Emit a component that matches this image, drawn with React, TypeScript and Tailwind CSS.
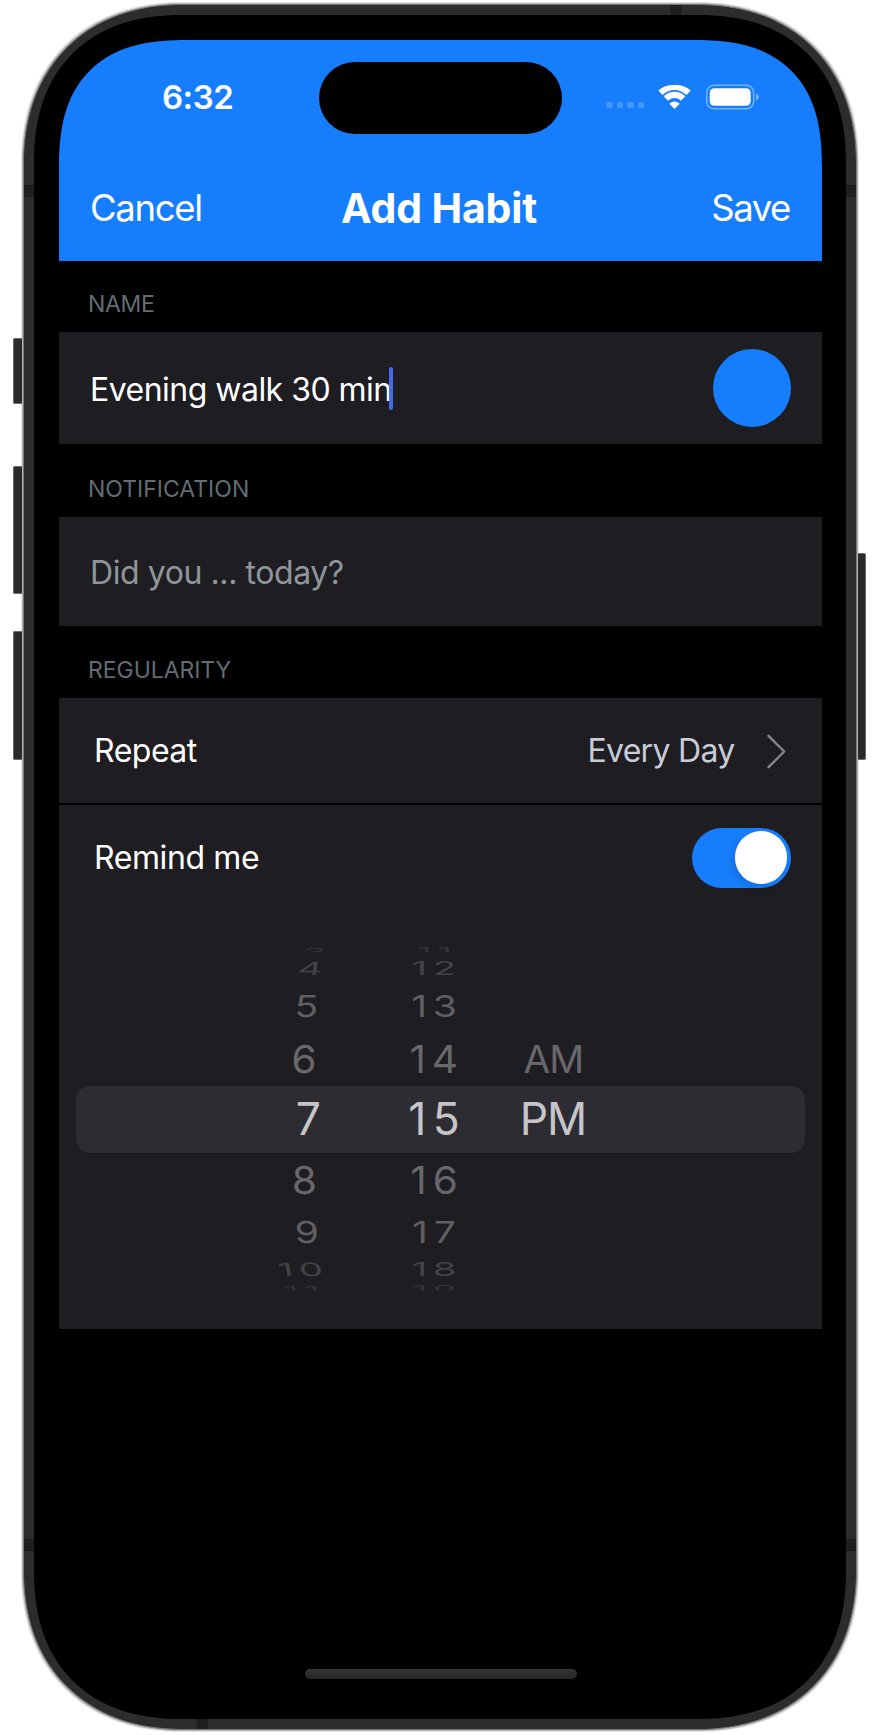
type PickerRow = {
  hour: string;
  minute: string;
  period?: string;
  height: string;
  color: string;
  sx: number;
  sy: number;
  skew: number;
  hourShift: number;
  shiftY?: number;
  clipped?: boolean;
};

const rows: PickerRow[] = [
  { hour: "3", minute: "11", height: "h-[15px]", color: "text-[#343337]", sx: 0.84, sy: 0.25, skew: -20, hourShift: 9, shiftY: 2, clipped: true },
  { hour: "4", minute: "12", height: "h-[22px]", color: "text-[#434246]", sx: 0.86, sy: 0.41, skew: -10, hourShift: 4.8 },
  { hour: "5", minute: "13", height: "h-[53px]", color: "text-[#5f5e62]", sx: 0.88, sy: 0.68, skew: -3, hourShift: 2 },
  { hour: "6", minute: "14", period: "AM", height: "h-[53px]", color: "text-[#68676b]", sx: 0.91, sy: 0.86, skew: -1, hourShift: -0.7 },
  { hour: "7", minute: "15", period: "PM", height: "h-[67px]", color: "text-[#c6c5c8]", sx: 1, sy: 1, skew: 0, hourShift: 3.3 },
  { hour: "8", minute: "16", height: "h-[55px]", color: "text-[#68676b]", sx: 0.91, sy: 0.86, skew: 1, hourShift: -0.5 },
  { hour: "9", minute: "17", height: "h-[50px]", color: "text-[#5f5e62]", sx: 0.88, sy: 0.68, skew: 3, hourShift: 2 },
  { hour: "10", minute: "18", height: "h-[24px]", color: "text-[#434246]", sx: 0.86, sy: 0.41, skew: 10, hourShift: -5 },
  { hour: "11", minute: "19", height: "h-[13px]", color: "text-[#343337]", sx: 0.84, sy: 0.25, skew: 20, hourShift: -3.5, shiftY: 2, clipped: true },
];

function WheelText({ text, row, tilt = false }: { text: string; row: PickerRow; tilt?: boolean }) {
  const x = tilt ? row.hourShift : 0;
  const skew = tilt ? row.skew : 0;
  const sx = text === "AM" ? 0.87 : row.sx;
  const spacing = /^\d\d$/.test(text) ? "-mr-[6.5px] tracking-[6.5px]" : text.length === 2 ? "tracking-[-1px]" : "";
  return (
    <span
      className={`block text-[44.5px] leading-none whitespace-nowrap ${spacing}`}
      style={{
        transform: `translate(${x}px, ${row.shiftY ?? 0}px) skewX(${skew}deg) scale(${sx}, ${row.sy})`,
        transformOrigin: spacing.startsWith("-mr") ? "calc(50% - 3.25px) 50%" : "50% 50%",
        clipPath: row.clipped ? "inset(0 0 50% 0)" : undefined,
      }}
    >
      {text}
    </span>
  );
}

function TimePicker() {
  return (
    <div className="flex flex-col px-[17px] pt-[32.5px] pb-[34px]">
      {rows.map((row) => (
        <div
          key={row.minute}
          className={`flex items-center pl-[202px] ${row.height} ${row.color} ${row.period === "PM" ? "rounded-[14px] bg-[#2d2c32]" : ""}`}
        >
          <div className="flex w-[54px] justify-center">
            <WheelText text={row.hour} row={row} tilt />
          </div>
          <div className="ml-[72px] flex w-[60px] justify-center">
            <WheelText text={row.minute} row={row} />
          </div>
          <div className="ml-[58px] flex w-[62px] justify-center">
            {row.period && <WheelText text={row.period} row={row} />}
          </div>
        </div>
      ))}
    </div>
  );
}

function StatusBar() {
  return (
    <div className="flex h-[113px] items-center pl-[103px]">
      <span className="w-[157px] pt-[2px] text-[33px] font-semibold tracking-[-0.5px]">6:32</span>
      <div className="mt-[2px] h-[72px] w-[243px] rounded-full bg-black" />
      <div className="mt-[17px] ml-[44px] flex gap-[4px]">
        {[0, 1, 2, 3].map((i) => (
          <span key={i} className="size-[6.5px] rounded-[2px] bg-white/20" />
        ))}
      </div>
      <svg className="ml-[14px] h-[24px] w-[33px]" viewBox="0 0 33 24" fill="#fff">
        <path d="M16.5 4.9c4.4 0 8.4 1.7 11.400 4.600.3.3.7.3 1 0l3.200-3.300c.3-.3.3-.8 0-1.100A22.300 22.300 0 0 0 16.500 0 22.300 22.300 0 0 0 .900 5.100c-.300.300-.300.800 0 1.100l3.200 3.300c.300.300.700.300 1 0A16.500 16.500 0 0 1 16.500 4.900Z" />
        <path d="M16.500 12.900c2.300 0 4.300.800 5.900 2.300.300.300.700.300 1 0l3.300-3.300c.300-.300.300-.800 0-1.100a14.700 14.700 0 0 0-20.400 0c-.300.300-.300.800 0 1.100l3.300 3.300c.300.300.700.300 1 0a8.600 8.600 0 0 1 5.900-2.300Z" />
        <path d="M21.200 18.300c.300.300.300.700 0 1l-4.200 4.200c-.300.300-.700.300-1 0l-4.200-4.200c-.300-.300-.300-.700 0-1a7.200 7.200 0 0 1 9.400 0Z" />
      </svg>
      <svg className="ml-[14.5px] h-[26px] w-[53px]" viewBox="0 0 53 26">
        <rect x="0.7" y="1.200" width="47" height="23.600" rx="7.500" fill="none" stroke="#fff" strokeOpacity="0.4" strokeWidth="1.500" />
        <rect x="3.700" y="4.200" width="41" height="17.600" rx="4.800" fill="#fff" />
        <path d="M50 9.500c1.800.700 2.700 2 2.700 3.500s-.900 2.800-2.700 3.500Z" fill="#fff" fillOpacity="0.45" />
      </svg>
    </div>
  );
}

const buttonClass = "absolute z-10 border border-[#6b6b6b] bg-[#2b2b2b]";
const bandClass = "absolute bg-[#1e1e1e]";
const labelClass = "px-[29px] text-[23px] leading-[32px] text-[#626d73]";

export default function App() {
  return (
    <div className="relative h-[1735px] w-[880px] overflow-hidden bg-white pt-[4px] pl-[23px] font-[Inter,sans-serif] text-white">
      <div className={`${buttonClass} top-[338px] left-[13px] h-[66px] w-[9px] rounded-l-[2px] border-r-0`} />
      <div className={`${buttonClass} top-[466px] left-[13px] h-[128px] w-[9px] rounded-l-[2px] border-r-0`} />
      <div className={`${buttonClass} top-[631px] left-[13px] h-[129px] w-[9px] rounded-l-[2px] border-r-0`} />
      <div className={`${buttonClass} top-[553px] left-[858px] h-[207px] w-[8px] rounded-r-[2px] border-l-0`} />

      <div className="relative h-[1726px] w-[834px] rounded-[160px] border border-[#777777] bg-[#2c2c2c] p-[10px] shadow-[0_0_0_1px_#b4b4b4,0_0_0_2px_#e4e4e4] [corner-shape:superellipse(1.14)]">
        <div className={`${bandClass} top-[180px] left-0 h-[12px] w-[10px]`} />
        <div className={`${bandClass} top-[180px] right-0 h-[12px] w-[10px]`} />
        <div className={`${bandClass} top-[1534px] left-0 h-[12px] w-[10px]`} />
        <div className={`${bandClass} top-[1534px] right-0 h-[12px] w-[10px]`} />
        <div className={`${bandClass} top-0 left-[646px] h-[10px] w-[12px]`} />
        <div className={`${bandClass} bottom-0 left-[173px] h-[10px] w-[11px]`} />

        <div className="h-full rounded-[148px] bg-black pt-[25px] pr-[24px] pb-[25px] pl-[25px] [corner-shape:superellipse(1.2)]">
          <div className="flex h-full flex-col overflow-hidden rounded-[128px] bg-black [corner-shape:superellipse(1.337)]">
            <header className="h-[221px] shrink-0 bg-[#167efd]">
              <StatusBar />
              <nav className="grid h-[108px] grid-cols-[1fr_auto_1fr] items-center pt-[2px] pr-[32px] pl-[31px] text-[36.5px]">
                <span className="tracking-[-1.3px]">Cancel</span>
                <h1 className="-ml-[2px] pt-px text-[41px] font-bold tracking-[-0.15px]">Add Habit</h1>
                <span className="text-right tracking-[-1.4px]">Save</span>
              </nav>
            </header>

            <div className={`${labelClass} h-[71px] shrink-0 pt-[26.5px] tracking-[-0.3px]`}>NAME</div>
            <div className="flex h-[112px] shrink-0 items-center justify-between bg-[#1e1d21] pr-[31px] pl-[31px]">
              <div className="flex items-center">
                <span className="pt-[3px] text-[32px] tracking-[-0.52px]">Evening walk 30 min</span>
                <span className="-ml-[2.5px] h-[43px] w-[4px] rounded-full bg-[#4468ee]" />
              </div>
              <span className="size-[78px] rounded-full bg-[#167efd]" />
            </div>

            <div className={`${labelClass} h-[73px] shrink-0 pt-[28.5px]`}>NOTIFICATION</div>
            <div className="flex h-[109px] shrink-0 items-center bg-[#1e1d21] pt-[2px] pl-[31px] text-[32px] tracking-[-0.42px] text-[#8e9699]">
              Did you ... today?
            </div>

            <div className={`${labelClass} h-[72px] shrink-0 pt-[28px] tracking-[-0.05px]`}>REGULARITY</div>
            <div className="flex h-[105px] shrink-0 items-center bg-[#1e1d21] pr-[36px] pl-[35px] text-[32px]">
              <span className="pt-px tracking-[-0.5px]">Repeat</span>
              <span className="ml-auto pt-px tracking-[-0.7px] text-[#c7ccd8]">Every Day</span>
              <svg className="mt-[2px] ml-[32.5px] h-[35px] w-[19px]" viewBox="0 0 19 35" fill="none" stroke="#84858a" strokeWidth="2.4" strokeLinecap="round" strokeLinejoin="round">
                <path d="M1.5 1.8 17.2 17.5 1.5 33.2" />
              </svg>
            </div>
            <div className="mt-[2px] h-[524px] shrink-0 bg-[#1e1d21]">
              <div className="flex h-[105px] items-center justify-between pr-[31px] pl-[35px] text-[32px]">
                <span className="pt-px tracking-[-0.4px]">Remind me</span>
                <span className="flex h-[60px] w-[99px] items-center justify-end rounded-full bg-[#167efd] pr-[4px]">
                  <span className="size-[52.5px] rounded-full bg-white shadow-[-3px_4px_8px_rgba(0,0,0,0.12)]" />
                </span>
              </div>
              <TimePicker />
            </div>

            <div className="mt-auto mb-[15px] flex shrink-0 justify-center">
              <div className="h-[10px] w-[272px] rounded-full bg-linear-to-b from-[#363536] to-[#262626]" />
            </div>
          </div>
        </div>
      </div>
    </div>
  );
}
